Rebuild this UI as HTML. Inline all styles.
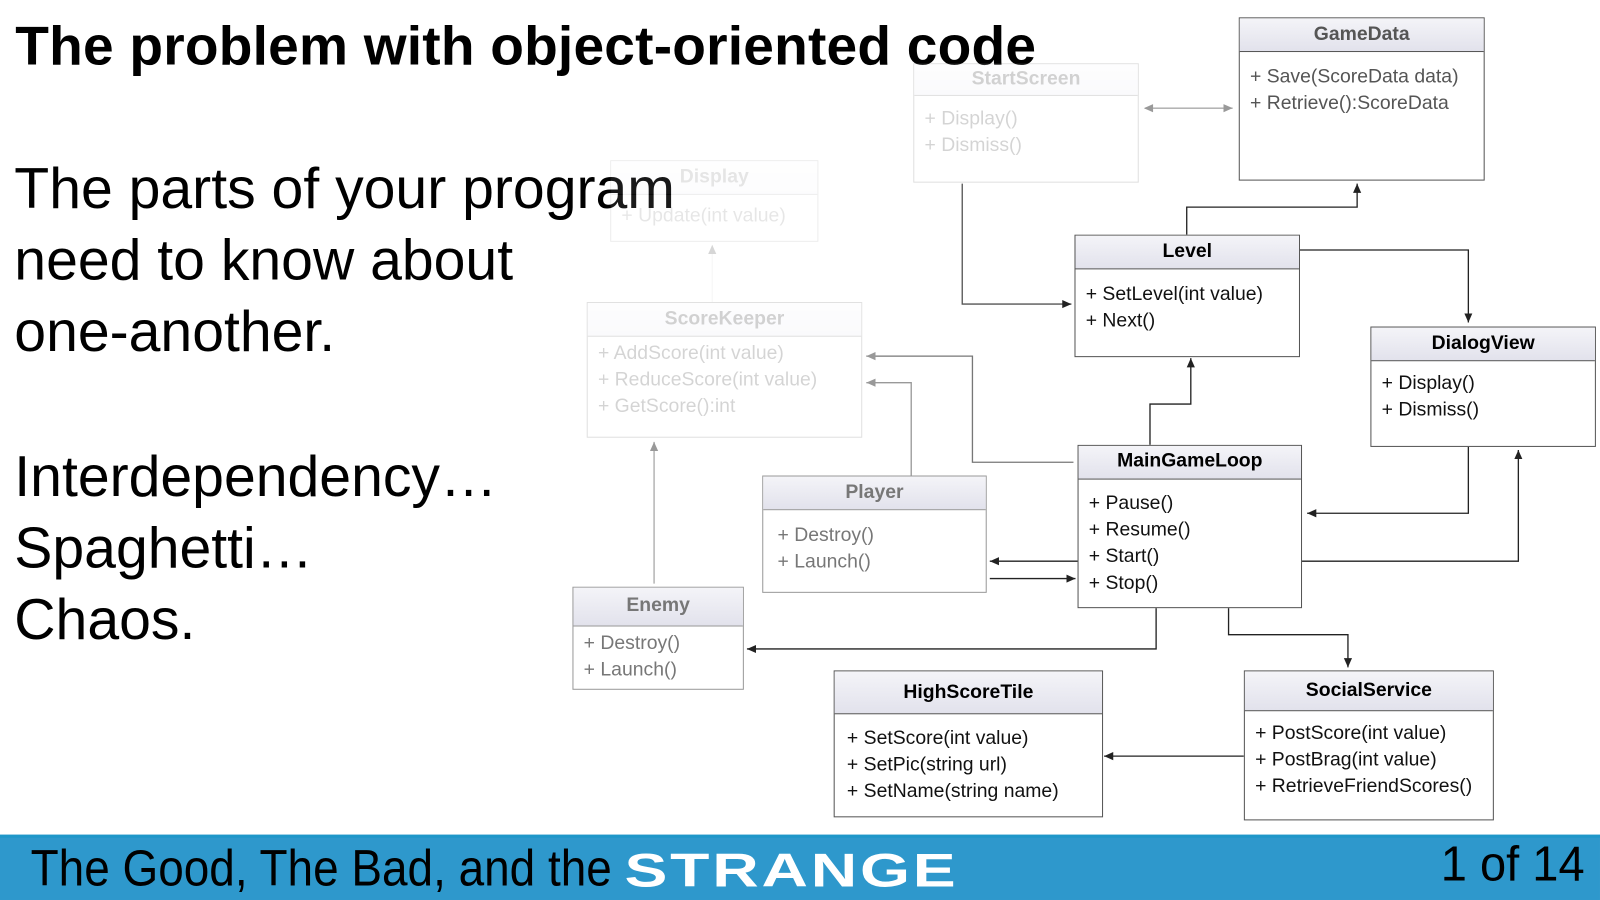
<!DOCTYPE html>
<html><head><meta charset="utf-8"><style>
html,body{margin:0;padding:0;width:1600px;height:900px;overflow:hidden;background:#fff}
#w{position:absolute;left:0;top:0;width:1568px;height:882px;transform:scale(1.0204);transform-origin:0 0;font-family:"Liberation Sans",sans-serif}
.t{position:absolute;white-space:nowrap}
.b{position:absolute;border:1.3px solid #555;background:#fff;box-sizing:border-box}
.b .h{border-bottom:1.3px solid #555;background:linear-gradient(#f4f4f8,#e2e2ec);font-weight:bold;font-size:19px;text-align:center;box-sizing:border-box}
.b .m{font-size:19px;line-height:26px;padding:10px 0 0 10px;color:#111}
.f{opacity:.18}
.g .h,.g .m{color:#777}
</style></head><body><div id="w">
<div class="t" style="left:15px;top:14px;font-size:54px;font-weight:bold;color:#000;letter-spacing:0.2px">The problem with object-oriented code</div>
<div class="t" style="left:14px;top:150px;font-size:56px;line-height:70px;color:#000">The parts of your program<br>need to know about<br>one-another.</div>
<div class="t" style="left:14px;top:432px;font-size:56px;line-height:70px;color:#000">Interdependency…<br>Spaghetti…<br>Chaos.</div>

<svg style="position:absolute;left:0;top:0" width="1568" height="882">
<defs>
<marker id="a" markerWidth="10" markerHeight="10" refX="9" refY="5" orient="auto" markerUnits="userSpaceOnUse"><path d="M0,1 L9,5 L0,9z" fill="#222"/></marker>
<marker id="ag" markerWidth="10" markerHeight="10" refX="9" refY="5" orient="auto" markerUnits="userSpaceOnUse"><path d="M0,1 L9,5 L0,9z" fill="#999"/></marker>
<marker id="as" markerWidth="10" markerHeight="10" refX="1" refY="5" orient="auto" markerUnits="userSpaceOnUse"><path d="M9,1 L0,5 L9,9z" fill="#999"/></marker>
</defs>
<g fill="none" stroke-width="1.3">
<path d="M1122,106 H1208" stroke="#aaa" marker-end="url(#ag)" marker-start="url(#as)"/>
<path d="M1163,230 V203 H1330 V180" stroke="#222" marker-end="url(#a)"/>
<path d="M1273,245 H1439 V316" stroke="#222" marker-end="url(#a)"/>
<path d="M943,180 V298 H1050" stroke="#555" marker-end="url(#a)"/>
<path d="M1127,436 V396 H1167 V351" stroke="#222" marker-end="url(#a)"/>
<path d="M1052,453 H953 V349 H849" stroke="#777" marker-end="url(#ag)"/>
<path d="M893,466 V375 H849" stroke="#999" marker-end="url(#ag)"/>
<path d="M641,572 V433" stroke="#aaa" marker-end="url(#ag)"/>
<path d="M698,296 V240" stroke="#eee" marker-end="url(#ag)" opacity=".4"/>
<path d="M1056,550 H970" stroke="#222" marker-end="url(#a)"/>
<path d="M970,567 H1054" stroke="#222" marker-end="url(#a)"/>
<path d="M1439,437 V503 H1281" stroke="#222" marker-end="url(#a)"/>
<path d="M1275,550 H1488 V441" stroke="#222" marker-end="url(#a)"/>
<path d="M1133,595 V636 H732" stroke="#222" marker-end="url(#a)"/>
<path d="M1204,595 V622 H1321 V654" stroke="#222" marker-end="url(#a)"/>
<path d="M1219,741 H1082" stroke="#222" marker-end="url(#a)"/>
</g></svg>

<div class="b" style="left:1214px;top:17px;width:241px;height:160px"><div class="h" style="height:33px;line-height:32px;color:#555">GameData</div><div class="m" style="color:#555;padding-top:12px">+ Save(ScoreData data)<br>+ Retrieve():ScoreData</div></div>
<div class="b f" style="left:895px;top:62px;width:221px;height:117px"><div class="h" style="height:31px;line-height:30px">StartScreen</div><div class="m">+ Display()<br>+ Dismiss()</div></div>
<div class="b f" style="left:598px;top:157px;width:204px;height:80px;opacity:.1"><div class="h" style="height:33px;line-height:32px">Display</div><div class="m" style="padding-top:8px">+ Update(int value)</div></div>
<div class="b f" style="left:575px;top:296px;width:270px;height:133px"><div class="h" style="height:33px;line-height:32px">ScoreKeeper</div><div class="m" style="padding-top:4px">+ AddScore(int value)<br>+ ReduceScore(int value)<br>+ GetScore():int</div></div>
<div class="b" style="left:1053px;top:230px;width:221px;height:120px"><div class="h" style="height:33px;line-height:32px">Level</div><div class="m" style="padding-top:12px">+ SetLevel(int value)<br>+ Next()</div></div>
<div class="b" style="left:1343px;top:320px;width:221px;height:118px"><div class="h" style="height:33px;line-height:32px">DialogView</div><div class="m" style="padding-top:9px">+ Display()<br>+ Dismiss()</div></div>
<div class="b" style="left:1056px;top:436px;width:220px;height:160px"><div class="h" style="height:33px;line-height:30px">MainGameLoop</div><div class="m" style="padding-top:11px">+ Pause()<br>+ Resume()<br>+ Start()<br>+ Stop()</div></div>
<div class="b g" style="left:747px;top:466px;width:220px;height:115px;border-color:#999"><div class="h" style="height:33px;line-height:32px;border-color:#999">Player</div><div class="m" style="padding-top:12px;padding-left:14px">+ Destroy()<br>+ Launch()</div></div>
<div class="b g" style="left:561px;top:575px;width:168px;height:101px;border-color:#999"><div class="h" style="height:38px;line-height:36px;border-color:#999">Enemy</div><div class="m" style="padding-top:4px">+ Destroy()<br>+ Launch()</div></div>
<div class="b" style="left:817px;top:657px;width:264px;height:144px"><div class="h" style="height:42px;line-height:41px">HighScoreTile</div><div class="m" style="padding-top:11px;padding-left:12px">+ SetScore(int value)<br>+ SetPic(string url)<br>+ SetName(string name)</div></div>
<div class="b" style="left:1219px;top:657px;width:245px;height:147px"><div class="h" style="height:39px;line-height:38px">SocialService</div><div class="m" style="padding-top:9px">+ PostScore(int value)<br>+ PostBrag(int value)<br>+ RetrieveFriendScores()</div></div>

<div style="position:absolute;left:0;top:818px;width:1568px;height:64px;background:#2e98cc;border-top:3px solid #1f97c9;box-sizing:border-box"></div>
<div class="t" style="left:30px;top:822px;font-size:50px;color:#000;transform:scaleX(.9);transform-origin:0 0">The Good, The Bad, and the</div>
<div class="t" style="left:612px;top:826px;font-size:46px;color:#fff;font-weight:bold;letter-spacing:2px;transform:scaleX(1.37);transform-origin:0 0">STRANGE</div>
<div class="t" style="left:1412px;top:820px;font-size:48px;color:#000;transform:scaleX(.96);transform-origin:0 0">1 of 14</div>
</div></body></html>
